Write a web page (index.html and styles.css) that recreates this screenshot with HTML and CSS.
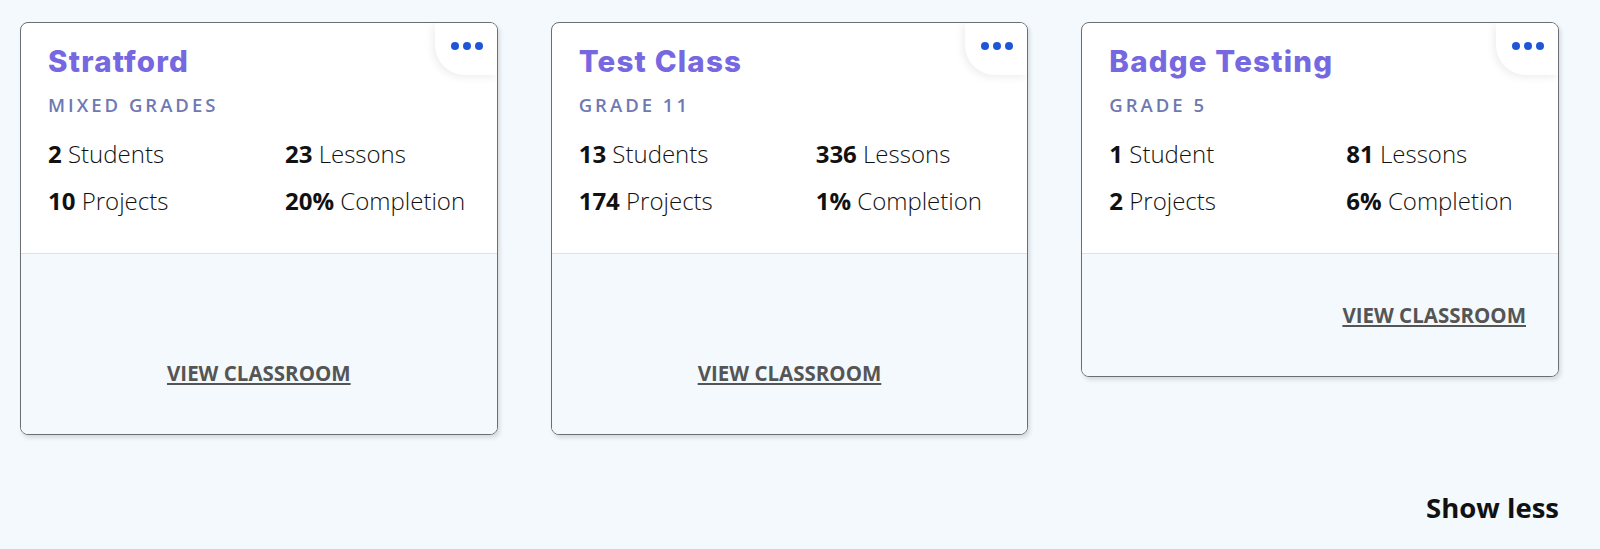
FILE: index.html
```html
<!DOCTYPE html>
<html lang="en">
<head>
  <meta charset="UTF-8" />
  <title>Classrooms</title>
  <link rel="stylesheet" href="styles.css">
</head>
<body>

  <div class="classrooms">

    <div class="card">
      <button class="menu" aria-label="Options"><span></span><span></span><span></span></button>
      <div class="card-body">
        <h2 class="title">Stratford</h2>
        <div class="grade">Mixed Grades</div>
        <div class="stats">
          <div><strong>2</strong> Students</div>
          <div><strong>23</strong> Lessons</div>
          <div><strong>10</strong> Projects</div>
          <div><strong>20%</strong> Completion</div>
        </div>
      </div>
      <div class="card-footer">
        <div class="badges"></div>
        <a href="#" class="view">View Classroom</a>
      </div>
    </div>

    <div class="card">
      <button class="menu" aria-label="Options"><span></span><span></span><span></span></button>
      <div class="card-body">
        <h2 class="title">Test Class</h2>
        <div class="grade">Grade 11</div>
        <div class="stats">
          <div><strong>13</strong> Students</div>
          <div><strong>336</strong> Lessons</div>
          <div><strong>174</strong> Projects</div>
          <div><strong>1%</strong> Completion</div>
        </div>
      </div>
      <div class="card-footer">
        <div class="badges"></div>
        <a href="#" class="view">View Classroom</a>
      </div>
    </div>

    <div class="card">
      <button class="menu" aria-label="Options"><span></span><span></span><span></span></button>
      <div class="card-body">
        <h2 class="title">Badge Testing</h2>
        <div class="grade">Grade 5</div>
        <div class="stats">
          <div><strong>1</strong> Student</div>
          <div><strong>81</strong> Lessons</div>
          <div><strong>2</strong> Projects</div>
          <div><strong>6%</strong> Completion</div>
        </div>
      </div>
      <div class="card-footer right">
        <a href="#" class="view">View Classroom</a>
      </div>
    </div>

  </div>

  <div class="more">
    <a href="#" class="show-less">Show less</a>
  </div>

</body>
</html>
```

FILE: styles.css
```css
body {
  font-family: "Open Sans", Arial, sans-serif;
  background: #f3f9fc;
  margin: 0;
  padding: 22px 41px 0 20px;
  color: #111;
}
.classrooms {
  display: grid;
  grid-template-columns: repeat(3, 1fr);
  gap: 53px;
  align-items: start;
}
.card {
  position: relative;
  background: #fff;
  border: 1px solid #6b6e73;
  border-radius: 8px;
  box-shadow: 2px 3px 4px rgba(0, 0, 0, 0.12);
  overflow: hidden;
}
.menu {
  position: absolute;
  top: 0;
  right: 0;
  width: 62px;
  height: 52px;
  border: none;
  background: #fff;
  border-bottom-left-radius: 30px;
  box-shadow: -2px 2px 8px rgba(0, 0, 0, 0.08);
  display: flex;
  justify-content: center;
  align-items: center;
  gap: 4px;
  padding: 0 0 6px 2px;
  cursor: pointer;
}
.menu span {
  width: 8px;
  height: 8px;
  border-radius: 50%;
  background: #1f56d8;
}
.card-body {
  padding: 20px 28px 35px 27px;
  border-bottom: 1px solid #d5e5ee;
}
.title {
  margin: 0;
  font-family: Inter, sans-serif;
  font-size: 29.5px;
  font-weight: 800;
  letter-spacing: 1.2px;
  line-height: 36px;
  color: #7668e0;
}
.grade {
  margin-top: 14px;
  font-size: 18.5px;
  font-weight: 600;
  letter-spacing: 3px;
  text-transform: uppercase;
  color: #6e79b4;
  line-height: 24px;
}
.stats {
  display: grid;
  grid-template-columns: 237px 1fr;
  row-gap: 13px;
  margin-top: 20px;
  font-size: 24px;
  font-weight: 300;
  line-height: 34px;
}
.stats strong {
  font-weight: 700;
}
.card-footer {
  background: #f3f9fc;
  display: flex;
  flex-direction: column;
  align-items: center;
  padding: 47px 32px 47px;
}
.card-footer.right {
  align-items: flex-end;
}
.badges {
  height: 58px;
}
.view {
  font-size: 20.5px;
  font-weight: 700;
  color: #555;
  text-transform: uppercase;
  line-height: 28px;
}
.more {
  display: flex;
  justify-content: flex-end;
  margin-top: 54px;
}
.show-less {
  font-size: 27.5px;
  font-weight: 700;
  color: #111;
  text-decoration: none;
}
```
